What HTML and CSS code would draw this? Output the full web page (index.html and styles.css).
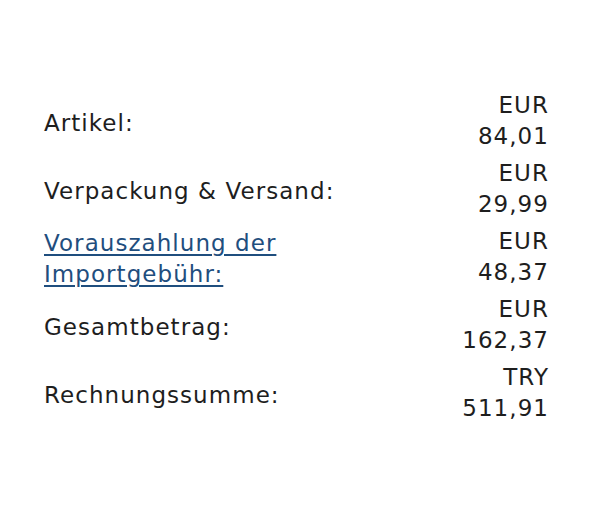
FILE: index.html
```html
<!DOCTYPE html>
<html lang="de">
<head>
<meta charset="utf-8">
<link rel="stylesheet" href="styles.css">
</head>
<body>
<div class="summary">
  <div class="label">Artikel:</div><div class="value">EUR 84,01</div>
  <div class="label">Verpackung &amp; Versand:</div><div class="value">EUR 29,99</div>
  <div class="label"><a href="#" class="link">Vorauszahlung der Importgebühr:</a></div><div class="value">EUR 48,37</div>
  <div class="label">Gesamtbetrag:</div><div class="value">EUR 162,37</div>
  <div class="label">Rechnungssumme:</div><div class="value">TRY 511,91</div>
</div>
</body>
</html>
```
FILE: styles.css
```css
html, body { margin: 0; padding: 0; background: #fff; }
body { font-family: "DejaVu Sans", Verdana, sans-serif; font-size: 23px; letter-spacing: 1.05px; color: #1e1e1e; }
.summary {
  display: grid;
  grid-template-columns: 1fr min-content;
  column-gap: 20px;
  padding: 87px 51px 0 44px;
  line-height: 31px;
}
.label, .value { padding: 3px 0; display: flex; align-items: center; }
.label { padding-top: 5px; padding-bottom: 1px; }
.value { text-align: right; justify-content: flex-end; }
.link { color: #1f4e7e; text-decoration: underline; text-underline-offset: 3px; text-decoration-thickness: 2px; }
```
